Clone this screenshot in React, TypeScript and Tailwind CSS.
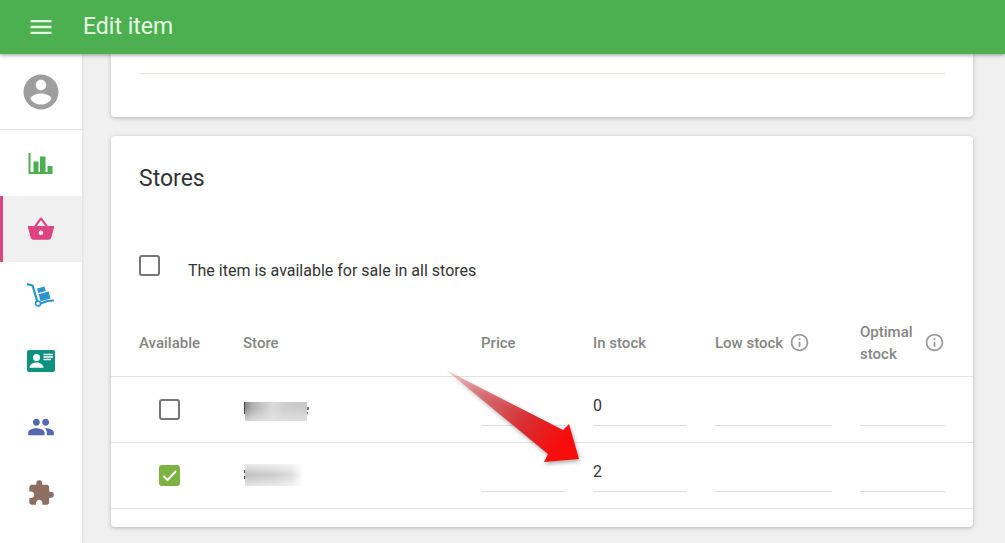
import { useState } from "react";
import { MdExtension, MdGroup, MdMenu, MdInfoOutline } from "react-icons/md";

interface StoreRow {
  id: number;
  available: boolean;
  price: string;
  inStock: string;
  lowStock: string;
  optimalStock: string;
}

type StockField = "price" | "inStock" | "lowStock" | "optimalStock";

const FIELDS: { key: StockField; label: string }[] = [
  { key: "price", label: "Price" },
  { key: "inStock", label: "In stock" },
  { key: "lowStock", label: "Low stock" },
  { key: "optimalStock", label: "Optimal stock" },
];

const INITIAL_ROWS: StoreRow[] = [
  { id: 1, available: false, price: "", inStock: "0", lowStock: "", optimalStock: "" },
  { id: 2, available: true, price: "", inStock: "2", lowStock: "", optimalStock: "" },
];

function AccountIcon() {
  return (
    <svg viewBox="0 0 24 24" className="w-[42px] h-[42px]" fill="#9e9e9e">
      <path d="M12 2C6.48 2 2 6.48 2 12s4.48 10 10 10 10-4.48 10-10S17.52 2 12 2zm0 3c1.66 0 3 1.34 3 3s-1.34 3-3 3-3-1.34-3-3 1.34-3 3-3zm0 14.2c-2.5 0-4.71-1.28-6-3.22.03-1.99 4-3.08 6-3.08 1.99 0 5.97 1.09 6 3.08-1.29 1.94-3.5 3.22-6 3.22z" />
    </svg>
  );
}

function ReportsIcon() {
  return (
    <svg viewBox="0 0 28 28" className="w-7 h-7" fill="#4caf50">
      <path d="M1.500 4h2v19h22v2h-24z" />
      <path d="M6.500 12.500h5V24h-5zM13 7.500h5.500V24H13zM20.500 17h5v7h-5z" />
    </svg>
  );
}

function ItemsIcon() {
  return (
    <svg viewBox="0 0 28 28" className="w-7 h-7" fill="#dc457f">
      <path
        fillRule="evenodd"
        d="M1 11h6.200L12.800 3.200q1.200-1.400 2.400 0L20.800 11H27v1.800L24.300 22.800q-.6 2-2.400 2H6.100q-1.800 0-2.400-2L1 12.800zM9.800 11h8.400L14 5.200zM14 15.400a2.300 2.300 0 1 0 0 4.600 2.300 2.300 0 0 0 0-4.600z"
      />
    </svg>
  );
}

function InventoryIcon() {
  return (
    <svg viewBox="0 0 28 28" className="w-7 h-7" fill="none">
      <path d="M0 3l5.500 1.500L10.500 21" stroke="#2a93d1" strokeWidth="2.200" strokeLinejoin="round" />
      <path d="M13.500 22.500l7-2.500 6.500-.5" stroke="#2a93d1" strokeWidth="2.200" />
      <circle cx="11" cy="22.500" r="2.500" stroke="#2a93d1" strokeWidth="1.700" />
      <path d="M10 7.500l7.500-2 1.300 4.500-7.400 2z" fill="#2a93d1" />
      <path d="M11.600 13.200l9.900-2.700 2 7-9.900 2.700z" fill="#2a93d1" />
    </svg>
  );
}

function EmployeesIcon() {
  return (
    <svg viewBox="0 0 28 28" className="w-7 h-7">
      <rect y="3" width="28" height="22" rx="2" fill="#0f9180" />
      <circle cx="9.500" cy="10.500" r="3.500" fill="#fff" />
      <path d="M2.500 20.800c0-3.500 4.400-5.300 7-5.300s7 1.800 7 5.300z" fill="#fff" />
      <path d="M16.500 7.500h9.500M16.500 10h9.500M16.500 12.500h7.500" stroke="#fff" strokeWidth="1.300" />
    </svg>
  );
}

const NAV = [
  { name: "Reports", icon: <ReportsIcon /> },
  { name: "Items", icon: <ItemsIcon /> },
  { name: "Inventory", icon: <InventoryIcon /> },
  { name: "Employees", icon: <EmployeesIcon /> },
  { name: "Customers", icon: <MdGroup className="w-7 h-7 text-[#5567af]" /> },
  { name: "Integrations", icon: <MdExtension className="w-7 h-7 text-[#8d6e63]" /> },
];

function Checkbox({ id, label, checked, onChange }: { id: string; label?: string; checked: boolean; onChange: () => void }) {
  return (
    <span className="relative block w-[21px] h-[21px] shrink-0">
      <input
        id={id}
        type="checkbox"
        aria-label={label}
        checked={checked}
        onChange={onChange}
        className="peer block appearance-none w-full h-full rounded-[3px] border-2 border-[#757575] checked:border-[#7cb342] checked:bg-[#7cb342]"
      />
      <svg viewBox="0 0 21 21" fill="none" className="absolute inset-0 hidden peer-checked:block pointer-events-none">
        <path d="M4.500 11l4 4 8.500-9" stroke="#fff" strokeWidth="2" />
      </svg>
    </span>
  );
}

// Store names are redacted
function HiddenName({ row }: { row: number }) {
  if (row === 1) {
    return (
      <svg viewBox="0 0 68 24" className="block w-[68px] h-6" role="img" aria-label="Store 1">
        <defs>
          <linearGradient id="name1">
            <stop offset="0" stopColor="#888" />
            <stop offset=".12" stopColor="#b0b0b0" />
            <stop offset=".3" stopColor="#cacaca" />
            <stop offset=".45" stopColor="#dadada" />
            <stop offset=".65" stopColor="#cecece" />
            <stop offset="1" stopColor="#c9c9c9" />
          </linearGradient>
          <linearGradient id="fade1" x1="0" y1="0" x2="0" y2="1">
            <stop offset=".3" stopColor="#e4e4e4" stopOpacity="0" />
            <stop offset="1" stopColor="#e4e4e4" stopOpacity=".8" />
          </linearGradient>
        </defs>
        <path d="M1 5h2v12H1z" fill="#444" />
        <path d="M64 10h2v3h-2zM64 15h1v2h-1z" fill="#777" />
        <path d="M2 5h62v19H2z" fill="url(#name1)" />
        <path d="M2 5h62v19H2z" fill="url(#fade1)" />
      </svg>
    );
  }
  return (
    <svg viewBox="0 0 68 24" className="block w-[68px] h-6" role="img" aria-label="Store 2">
      <defs>
        <linearGradient id="name2">
          <stop offset="0" stopColor="#c0c0c0" />
          <stop offset=".5" stopColor="#cccccc" />
          <stop offset=".8" stopColor="#dcdcdc" />
          <stop offset="1" stopColor="#fff" />
        </linearGradient>
        <linearGradient id="fade2" x1="0" y1="0" x2="0" y2="1">
          <stop offset="0" stopColor="#fff" stopOpacity=".7" />
          <stop offset=".5" stopColor="#fff" stopOpacity="0" />
          <stop offset="1" stopColor="#fff" stopOpacity=".6" />
        </linearGradient>
      </defs>
      <path d="M1 7h2v3H1zM1 13h2v3H1z" fill="#444" />
      <path d="M2 1h58v22H2z" fill="url(#name2)" />
      <path d="M2 1h58v22H2z" fill="url(#fade2)" />
    </svg>
  );
}

function Arrow() {
  return (
    <svg viewBox="0 0 150 104" className="absolute top-[229px] right-[383px] w-[150px] h-[104px] pointer-events-none drop-shadow-[1px_2px_2px_rgba(0,0,0,0.35)]">
      <defs>
        <linearGradient id="arrow" gradientUnits="userSpaceOnUse" x1="8" y1="5" x2="138" y2="94">
          <stop offset="0" stopColor="#e05050" stopOpacity="0.25" />
          <stop offset=".3" stopColor="#d84a4f" stopOpacity=".75" />
          <stop offset=".6" stopColor="#d92c30" />
          <stop offset=".85" stopColor="#f80d0d" />
          <stop offset="1" stopColor="#f80d0d" />
        </linearGradient>
      </defs>
      <path d="M6 5L123 65L129 59L139 94L104 97L108 89z" fill="url(#arrow)" />
    </svg>
  );
}

export default function App() {
  const [rows, setRows] = useState<StoreRow[]>(INITIAL_ROWS);
  const [allStores, setAllStores] = useState(false);

  function updateRow(id: number, patch: Partial<StoreRow>) {
    setRows(rows.map((r) => (r.id === id ? { ...r, ...patch } : r)));
  }

  return (
    <div className="min-h-screen flex flex-col bg-[#f0f0f0] font-['Roboto',sans-serif] text-[#333]">
      <header className="relative z-10 flex items-center gap-7 h-[54px] pl-[27px] bg-[#4caf50] text-[#e8fbe6] shadow-[0_1px_4px_rgba(0,0,0,0.4)]">
        <button aria-label="Menu">
          <MdMenu className="w-7 h-7" />
        </button>
        <h1 className="text-[23px] leading-7">Edit item</h1>
      </header>

      <div className="flex flex-1">
        {/* Sidebar */}
        <nav className="w-[82px] shrink-0 bg-white shadow-[0_0_3px_rgba(0,0,0,0.12)]">
          <button aria-label="Account" className="flex items-center justify-center w-full h-[76px] border-b border-[#e4e4e4]">
            <AccountIcon />
          </button>
          {NAV.map((item) => (
            <a
              key={item.name}
              href="#"
              aria-label={item.name}
              className={`relative flex items-center justify-center h-[66px] ${item.name === "Items" ? "bg-[#f0f0f0]" : ""}`}
            >
              {item.name === "Items" && <span className="absolute left-0 inset-y-0 w-[3px] bg-[#dc457f]" />}
              {item.icon}
            </a>
          ))}
        </nav>

        <main className="flex-1 min-w-0 pl-[29px] pr-8 pb-4">
          <section className="px-7 pt-[19px] pb-[43px] bg-white rounded-b shadow-[0_1px_4px_rgba(0,0,0,0.25)]">
            <hr className="border-[#e8e8e0]" />
          </section>

          {/* Stores */}
          <section className="relative mt-[19px] pt-7 pb-[18px] bg-white rounded shadow-[0_1px_4px_rgba(0,0,0,0.25)]">
            <h2 className="px-7 text-[23px] leading-[30px]">Stores</h2>

            <div className="flex items-start gap-7 px-7 mt-[61px] mb-7">
              <Checkbox id="all-stores" checked={allStores} onChange={() => setAllStores(!allStores)} />
              <label htmlFor="all-stores" className="pt-[5px] text-[16px] leading-[22px]">
                The item is available for sale in all stores
              </label>
            </div>

            <table className="w-full table-fixed">
              <colgroup>
                <col className="w-[132px]" />
                <col />
                <col className="w-[112px]" />
                <col className="w-[122px]" />
                <col className="w-[145px]" />
                <col className="w-[113px]" />
              </colgroup>
              <thead>
                <tr className="h-[66px] border-b border-[#e4e4e4] text-left text-[15px] leading-[22px] text-[#858585]">
                  <th className="pl-7 font-medium">Available</th>
                  <th className="font-medium">Store</th>
                  <th className="font-medium">Price</th>
                  <th className="font-medium">In stock</th>
                  <th className="font-medium">
                    <span className="flex items-center gap-1.5">
                      Low stock
                      <MdInfoOutline className="w-[21px] h-[21px] text-[#9a9a9a]" />
                    </span>
                  </th>
                  <th className="pr-7 font-medium">
                    <span className="flex items-center justify-between">
                      <span className="w-14">Optimal stock</span>
                      <MdInfoOutline className="w-[21px] h-[21px] text-[#9a9a9a]" />
                    </span>
                  </th>
                </tr>
              </thead>
              <tbody>
                {rows.map((row) => (
                  <tr key={row.id} className="h-[66px] border-b border-[#e4e4e4]">
                    <td className="pl-12">
                      <Checkbox
                        id={`store-${row.id}`}
                        label={`Store ${row.id} available`}
                        checked={row.available}
                        onChange={() => updateRow(row.id, { available: !row.available })}
                      />
                    </td>
                    <td>
                      <HiddenName row={row.id} />
                    </td>
                    {FIELDS.map((f) => (
                      <td key={f.key} className="pr-7 pb-4 align-bottom">
                        <input
                          type="text"
                          aria-label={`${f.label}, store ${row.id}`}
                          value={row[f.key]}
                          onChange={(e) => updateRow(row.id, { [f.key]: e.target.value })}
                          className="block w-full h-9 pb-1 border-b border-[#dedede] bg-transparent text-[16px] outline-none"
                        />
                      </td>
                    ))}
                  </tr>
                ))}
              </tbody>
            </table>

            <Arrow />
          </section>
        </main>
      </div>
    </div>
  );
}
